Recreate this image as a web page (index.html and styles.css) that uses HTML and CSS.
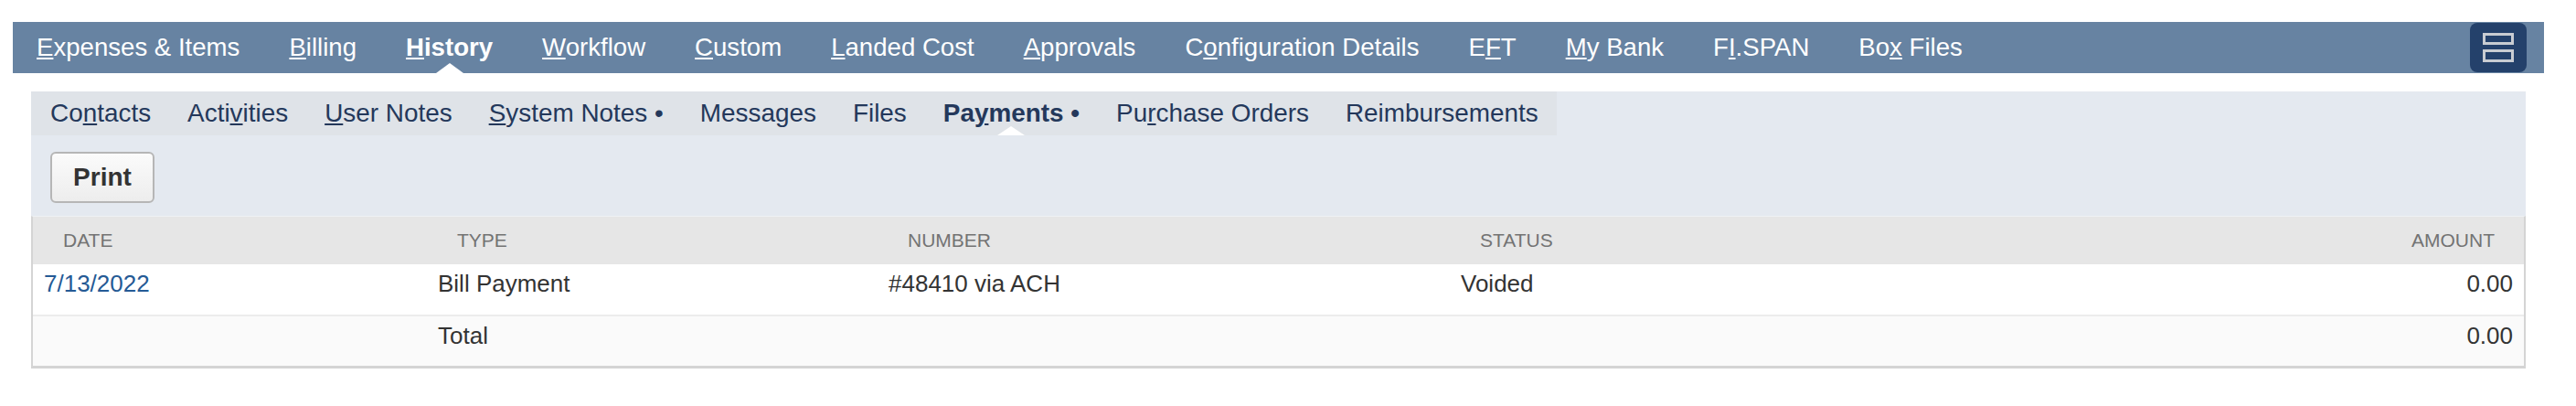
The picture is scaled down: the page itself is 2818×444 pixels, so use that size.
FILE: index.html
```html
<!DOCTYPE html>
<html lang="en">
    <head>
        <meta charset="UTF-8">
        <title>Vendor Bill - History</title>
        <link rel="stylesheet" href="styles.css">
    </head>
    <body>
        <nav class="tabs">
            <a class="tab"><u>E</u>xpenses &amp; Items</a>
            <a class="tab"><u>B</u>illing</a>
            <a class="tab active"><u>H</u>istory</a>
            <a class="tab"><u>W</u>orkflow</a>
            <a class="tab"><u>C</u>ustom</a>
            <a class="tab"><u>L</u>anded Cost</a>
            <a class="tab"><u>A</u>pprovals</a>
            <a class="tab">C<u>o</u>nfiguration Details</a>
            <a class="tab">E<u>F</u>T</a>
            <a class="tab"><u>M</u>y Bank</a>
            <a class="tab">F<u>I</u>.SPAN</a>
            <a class="tab">Bo<u>x</u> Files</a>
            <button class="tabMenu" title="View as list">
                <svg width="34" height="32" viewBox="0 0 34 32">
                    <rect x="1.5" y="1.5" width="31" height="10" fill="none" stroke="#c8ccd2" stroke-width="3"/>
                    <rect x="1.5" y="19.5" width="31" height="11" fill="none" stroke="#c8ccd2" stroke-width="3"/>
                </svg>
            </button>
        </nav>

        <section class="panel">
            <div class="subtabs">
                <a class="subtab">Co<u>n</u>tacts</a>
                <a class="subtab">Acti<u>v</u>ities</a>
                <a class="subtab"><u>U</u>ser Notes</a>
                <a class="subtab"><u>S</u>ystem Notes &bull;</a>
                <a class="subtab">Messages</a>
                <a class="subtab">Files</a>
                <a class="subtab active">Pa<u>y</u>ments &bull;</a>
                <a class="subtab">Pu<u>r</u>chase Orders</a>
                <a class="subtab">Reimbursements</a>
            </div>

            <div class="toolbar">
                <button class="btn">Print</button>
            </div>

            <table class="list">
                <thead>
                    <tr>
                        <th class="colDate">Date</th>
                        <th class="colType">Type</th>
                        <th class="colNumber">Number</th>
                        <th class="colStatus">Status</th>
                        <th class="colAmount num">Amount</th>
                    </tr>
                </thead>
                <tbody>
                    <tr class="row">
                        <td><a class="link">7/13/2022</a></td>
                        <td>Bill Payment</td>
                        <td>#48410 via ACH</td>
                        <td>Voided</td>
                        <td class="num">0.00</td>
                    </tr>
                    <tr class="total">
                        <td></td>
                        <td>Total</td>
                        <td></td>
                        <td></td>
                        <td class="num">0.00</td>
                    </tr>
                </tbody>
            </table>
        </section>
    </body>
</html>
```

FILE: styles.css
```css
body {
    margin: 0;
    padding: 0;
    width: 2818px;
    background-color: #ffffff;
    font-family: "Liberation Sans", Arial, sans-serif;
}

u {
    text-decoration-thickness: 2px;
    text-underline-offset: 2px;
}

/* main tabs */
.tabs {
    display: flex;
    align-items: center;
    height: 56px;
    margin: 24px 35px 0 14px;
    padding-right: 19px;
    background-color: #6783a2;
}

.tab {
    position: relative;
    padding: 0 27px;
    font-size: 27.6px;
    line-height: 56px;
    color: #ffffff;
    white-space: nowrap;
    text-decoration: none;
}

.tab:first-child {
    padding-left: 26px;
}

.tab.active {
    font-weight: bold;
}

.tab.active::after {
    content: "";
    position: absolute;
    left: 50%;
    bottom: 0;
    margin-left: -15px;
    border-left: 15px solid transparent;
    border-right: 15px solid transparent;
    border-bottom: 11px solid #ffffff;
}

.tabMenu {
    display: flex;
    align-items: center;
    justify-content: center;
    margin-left: auto;
    width: 62px;
    height: 54px;
    padding: 0;
    border: none;
    border-radius: 8px;
    background-color: #24416b;
}

/* subtab panel */
.panel {
    margin: 20px 55px 0 34px;
    background-color: #e4e9f0;
}

.subtabs {
    display: flex;
    width: fit-content;
    padding-left: 1px;
    background-color: #dfe3e8;
}

.subtab {
    position: relative;
    padding: 0 20px;
    font-size: 27.9px;
    line-height: 48px;
    color: #24385b;
    white-space: nowrap;
    text-decoration: none;
}

.subtab.active {
    font-weight: bold;
}

.subtab.active::after {
    content: "";
    position: absolute;
    left: 50%;
    bottom: 0;
    margin-left: -15px;
    border-left: 15px solid transparent;
    border-right: 15px solid transparent;
    border-bottom: 10px solid #ffffff;
}

.toolbar {
    padding: 18px 21px 14px;
}

.btn {
    display: block;
    width: 114px;
    height: 56px;
    padding: 0;
    border: 2px solid #b6b6b6;
    border-radius: 6px;
    background: linear-gradient(#fbfbfb, #ededed);
    font-family: "Liberation Sans", Arial, sans-serif;
    font-size: 28px;
    font-weight: bold;
    color: #333333;
}

/* list */
.list {
    width: 100%;
    table-layout: fixed;
    border-collapse: separate;
    border-spacing: 0;
    border: 2px solid #d4d4d4;
    border-top: 1px solid #eef1f5;
    border-bottom-width: 3px;
    background-color: #ffffff;
}

.colDate { width: 431px; }
.colType { width: 493px; }
.colNumber { width: 626px; }
.colAmount { width: 375px; }

.list th {
    box-sizing: border-box;
    height: 52px;
    padding: 0 0 0 33px;
    background-color: #e6e6e6;
    font-size: 21px;
    font-weight: normal;
    color: #737373;
    text-align: left;
    text-transform: uppercase;
}

.list th.num {
    padding: 0 32px 0 0;
    text-align: right;
}

.list td {
    padding: 6px 0 0 12px;
    vertical-align: top;
    font-size: 26px;
    line-height: 30px;
    color: #333333;
}

.list td.num {
    padding: 6px 12px 0 0;
    text-align: right;
}

.row {
    height: 57px;
}

.row td {
    border-bottom: 2px solid #ececec;
}

.total {
    height: 54px;
}

.total td {
    background-color: #fafafa;
}

.link {
    color: #255a95;
    text-decoration: none;
}
```
